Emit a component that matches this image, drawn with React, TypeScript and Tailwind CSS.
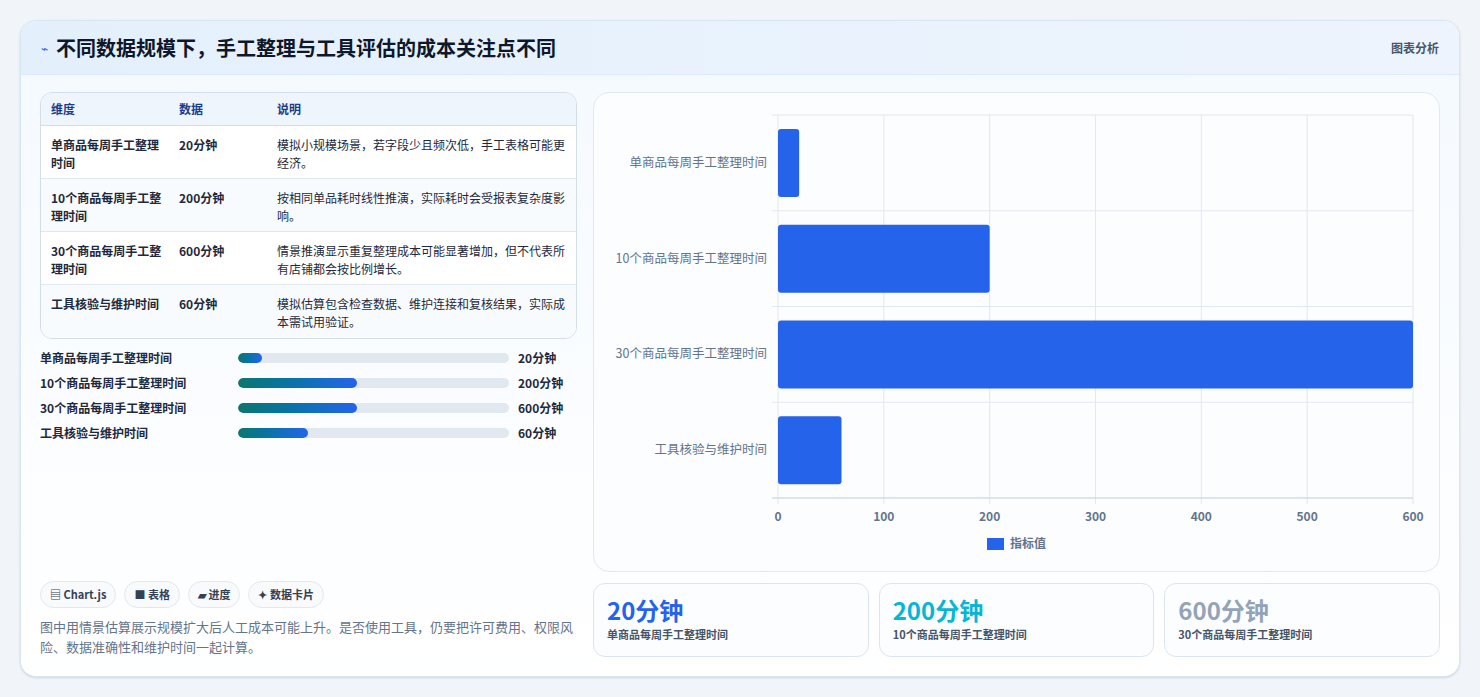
import React from 'react';

const font = { fontFamily: '"Noto Sans CJK SC", "Noto Sans", sans-serif' };

const rows = [
  { name: '单商品每周手工整理时间', val: '20分钟', note: '模拟小规模场景，若字段少且频次低，手工表格可能更经济。', pct: 9 },
  { name: '10个商品每周手工整理时间', val: '200分钟', note: '按相同单品耗时线性推演，实际耗时会受报表复杂度影响。', pct: 44 },
  { name: '30个商品每周手工整理时间', val: '600分钟', note: '情景推演显示重复整理成本可能显著增加，但不代表所有店铺都会按比例增长。', pct: 44 },
  { name: '工具核验与维护时间', val: '60分钟', note: '模拟估算包含检查数据、维护连接和复核结果，实际成本需试用验证。', pct: 26 },
];

const chartVals = [20, 200, 600, 60];

const Chart = () => {
  const x0 = 184, x1 = 819, y0 = 22, y1 = 405;
  const w = x1 - x0;
  const rh = (y1 - y0) / 4;
  return (
    <svg width="845" height="479" className="block">
      {[0, 1, 2, 3, 4, 5, 6].map(i => (
        <line key={i} x1={x0 + (w * i) / 6} x2={x0 + (w * i) / 6} y1={y0} y2={y1 + 6} stroke="#e2e8f0" />
      ))}
      {[0, 1, 2, 3, 4].map(i => (
        <line key={i} x1={x0 - 6} x2={x1} y1={y0 + rh * i} y2={y0 + rh * i} stroke="#e2e8f0" />
      ))}
      <line x1={x0 - 6} x2={x1} y1={y1} y2={y1} stroke="#cbd5e1" />
      {chartVals.map((v, i) => (
        <g key={i}>
          <rect x={x0} y={y0 + rh * i + 14} width={(w * v) / 600} height={68} rx={3} fill="#2563eb" />
          <text x={173} y={y0 + rh * i + rh / 2 + 4} textAnchor="end" fontSize="12.5" fill="#64748b" style={font}>{rows[i].name}</text>
        </g>
      ))}
      {[0, 100, 200, 300, 400, 500, 600].map((t, i) => (
        <text key={t} x={x0 + (w * i) / 6} y={428} textAnchor="middle" fontSize="12" fontWeight="600" fill="#64748b" style={font}>{t}</text>
      ))}
      <rect x={393} y={445} width={17} height={12} fill="#2563eb" />
      <text x={416} y={455} fontSize="12" fontWeight="600" fill="#64748b" style={font}>指标值</text>
    </svg>
  );
};

export default function App() {
  return (
    <div className="min-h-screen bg-[#f1f5f9] p-5" style={font}>
      <div className="rounded-2xl border border-[#d6e6f2] bg-white shadow-sm overflow-hidden h-[657px] flex flex-col">
        <div className="h-[55px] flex items-center justify-between px-[20px] bg-gradient-to-r from-[#e3f0fc] to-[#eef4fd] border-b border-[#dbeafe]">
          <div className="flex items-center gap-2">
            <span className="text-[#2563eb] text-xs">⌁</span>
            <h1 className="text-[20px] font-bold text-[#0f172a]">不同数据规模下，手工整理与工具评估的成本关注点不同</h1>
          </div>
          <span className="text-xs font-semibold text-[#475569]">图表分析</span>
        </div>
        <div className="flex-1 flex gap-4 px-[19px] pt-[17px] pb-[19px] bg-gradient-to-b from-[#f5faff] to-white">
          <div className="w-[540px] flex flex-col">
            <div className="rounded-xl border border-[#d5dee8] overflow-hidden">
              <div className="grid grid-cols-[128px_98px_1fr] h-[33px] items-center pl-[10px] pr-[2px] bg-[#eef5fd] border-b border-[#d5dee8] text-xs font-semibold text-[#1e3a8a]">
                <span>维度</span><span>数据</span><span>说明</span>
              </div>
              {rows.map((r, i) => (
                <div key={i} className={`grid grid-cols-[128px_98px_1fr] pl-[10px] pr-[2px] pt-[10px] h-[53px] text-xs leading-[18px] text-[#1e293b] ${i < 3 ? 'border-b border-[#e2e8f0]' : ''} ${i % 2 ? 'bg-[#f8fbfe]' : 'bg-white'}`}>
                  <span className="font-semibold pr-3">{r.name}</span>
                  <span className="font-semibold">{r.val}</span>
                  <span>{r.note}</span>
                </div>
              ))}
            </div>
            <div className="mt-[10px] flex flex-col gap-[7px]">
              {rows.map((r, i) => (
                <div key={i} className="flex items-center h-[18px] text-xs font-semibold text-[#1e293b]">
                  <span className="w-[198px]">{r.name}</span>
                  <div className="w-[271px] h-[10px] rounded-full bg-[#e2e8f0] overflow-hidden">
                    <div className="h-full rounded-full bg-gradient-to-r from-[#0f766e] to-[#2563eb]" style={{ width: `${r.pct}%` }} />
                  </div>
                  <span className="ml-[9px]">{r.val}</span>
                </div>
              ))}
            </div>
            <div className="mt-auto flex gap-2">
              {['▤ Chart.js', '■ 表格', '▰ 进度', '✦ 数据卡片'].map(c => (
                <span key={c} className="h-[27px] px-[9px] flex items-center rounded-full border border-[#e2e8f0] bg-[#f8fafc] text-[11px] font-semibold text-[#334155]">{c}</span>
              ))}
            </div>
            <p className="mt-[9px] text-[13px] leading-[20px] text-[#64748b]">图中用情景估算展示规模扩大后人工成本可能上升。是否使用工具，仍要把许可费用、权限风险、数据准确性和维护时间一起计算。</p>
          </div>
          <div className="flex-1 flex flex-col gap-[11px]">
            <div className="rounded-2xl border border-[#e2e8f0] bg-[#fbfdff] h-[480px]">
              <Chart />
            </div>
            <div className="grid grid-cols-3 gap-[10px]">
              {[
                { v: '20分钟', c: 'text-[#2563eb]', l: rows[0].name },
                { v: '200分钟', c: 'text-[#06b6d4]', l: rows[1].name },
                { v: '600分钟', c: 'text-[#94a3b8]', l: rows[2].name },
              ].map(s => (
                <div key={s.v} className="h-[74px] rounded-xl border border-[#dbe5f0] bg-[#fbfdff] px-[13px] pt-[10px]">
                  <div className={`text-[24px] leading-[32px] font-bold ${s.c}`}>{s.v}</div>
                  <div className="text-[11px] font-semibold text-[#475569]">{s.l}</div>
                </div>
              ))}
            </div>
          </div>
        </div>
      </div>
    </div>
  );
}
